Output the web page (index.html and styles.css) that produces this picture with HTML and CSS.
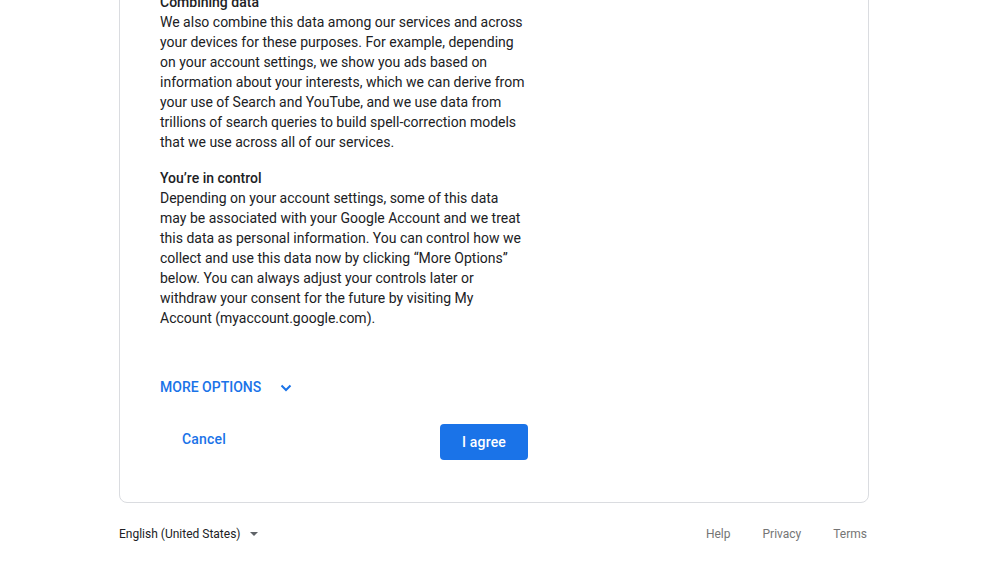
FILE: index.html
```html
<!doctype html>
<html lang="en">
    <head>
        <meta charset="utf-8">
        <title>Before you continue</title>
        <link rel="stylesheet" href="styles.css">
    </head>
    <body>
        <div class="page">
            <div class="card">
                <h4>Combining data</h4>
                <p>We also combine this data among our services and across your devices for these purposes. For example, depending on your account settings, we show you ads based on information about your interests, which we can derive from your use of Search and YouTube, and we use data from trillions of search queries to build spell-correction models that we use across all of our services.</p>

                <h4>You&rsquo;re in control</h4>
                <p>Depending on your account settings, some of this data may be associated with your Google Account and we treat this data as personal information. You can control how we collect and use this data now by clicking &ldquo;More Options&rdquo; below. You can always adjust your controls later or withdraw your consent for the future by visiting My Account (myaccount.google.com).</p>

                <div class="more">
                    <span>More options</span>
                    <svg class="chev" width="12" height="8" viewBox="0 0 12 8">
                        <path d="M1.5 1.5 L6 6 L10.5 1.5" fill="none" stroke="#1a73e8" stroke-width="2"/>
                    </svg>
                </div>

                <div class="actions">
                    <a class="btn btn-text">Cancel</a>
                    <a class="btn btn-primary">I agree</a>
                </div>
            </div>

            <div class="footer">
                <div class="lang">
                    English (United States)
                    <svg width="8" height="4" viewBox="0 0 10 5"><path d="M0 0 L10 0 L5 5 Z" fill="#5f6368"/></svg>
                </div>
                <div class="links">
                    <a>Help</a>
                    <a>Privacy</a>
                    <a>Terms</a>
                </div>
            </div>
        </div>
    </body>
</html>
```
FILE: styles.css
```css
body {
    font-family: Roboto, "Liberation Sans", Arial, sans-serif;
    font-size: 14px;
    color: #202124;
    margin: 0;
    padding: 0;
    background: #fff;
    overflow: hidden;
}

.page {
    width: 750px;
    margin: -61px 0 0 119px;
}

.card {
    border: 1px solid #dadce0;
    border-radius: 8px;
    padding: 52px 40px 42px 40px;
}

h4 {
    font-size: 14px;
    font-weight: 500;
    line-height: 20px;
    margin: 0;
}

p {
    width: 368px;
    line-height: 20px;
    margin: 0 0 16px 0;
}

.more {
    display: flex;
    align-items: center;
    gap: 19px;
    margin-top: 49px;
    height: 20px;
    color: #1a73e8;
    font-weight: 500;
    text-transform: uppercase;
}

.chev {
    margin-top: 1px;
}

.actions {
    display: flex;
    justify-content: space-between;
    align-items: flex-start;
    width: 368px;
    margin-top: 27px;
}

.btn {
    display: flex;
    align-items: center;
    justify-content: center;
    width: 88px;
    height: 36px;
    border-radius: 4px;
    font-weight: 500;
    letter-spacing: 0.2px;
}

.btn-text {
    color: #1a73e8;
    height: 30px;
}

.btn-primary {
    background: #1a73e8;
    color: #fff;
}

.footer {
    display: flex;
    justify-content: space-between;
    align-items: center;
    margin-top: 23px;
    font-size: 12px;
    line-height: 16px;
}

.lang {
    display: flex;
    align-items: center;
    gap: 9px;
    color: #202124;
}

.links {
    display: flex;
    gap: 32px;
    padding-right: 2px;
}

.links a {
    color: #757575;
}
```
